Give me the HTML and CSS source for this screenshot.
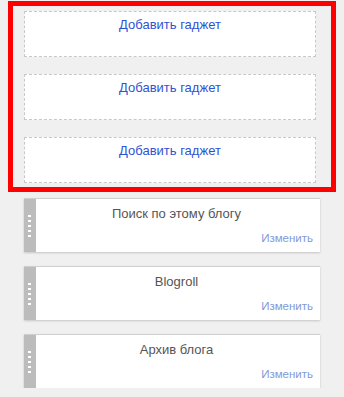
FILE: index.html
```html
<!DOCTYPE html>
<html lang="ru">
<head>
<meta charset="utf-8">
<link rel="stylesheet" href="styles.css">
</head>
<body>
<div class="panel">
  <div class="slot"><a class="add" href="#">Добавить гаджет</a></div>
  <div class="slot"><a class="add" href="#">Добавить гаджет</a></div>
  <div class="slot"><a class="add" href="#">Добавить гаджет</a></div>
</div>
<div class="widgets">
  <div class="widget">
    <div class="handle"><i></i><i></i><i></i><i></i><i></i></div>
    <div class="body">
      <div class="title">Поиск по этому блогу</div>
      <a class="edit" href="#">Изменить</a>
    </div>
  </div>
  <div class="widget">
    <div class="handle"><i></i><i></i><i></i><i></i><i></i></div>
    <div class="body">
      <div class="title">Blogroll</div>
      <a class="edit" href="#">Изменить</a>
    </div>
  </div>
  <div class="widget">
    <div class="handle"><i></i><i></i><i></i><i></i><i></i></div>
    <div class="body">
      <div class="title">Архив блога</div>
      <a class="edit" href="#">Изменить</a>
    </div>
  </div>
</div>
</body>
</html>
```
FILE: styles.css
```css
html, body {
  margin: 0;
  padding: 0;
  background: #f0f0f0;
  font-family: "Liberation Sans", Arial, sans-serif;
  font-size: 13px;
}
a { text-decoration: none; }
.panel {
  margin: 1px 0 0 8px;
  width: 328px;
  box-sizing: border-box;
  border: 5px solid #ff0000;
  padding: 5px 15px 4px 11px;
  display: flex;
  flex-direction: column;
  gap: 17px;
}
.slot {
  height: 46px;
  box-sizing: border-box;
  border: 1px dashed #c8c8c8;
  background: #fff;
  text-align: center;
  padding-top: 5px;
}
.add {
  color: #2f52d2;
  line-height: 16px;
}
.widgets {
  margin: 6px 0 0 24px;
  width: 296px;
  display: flex;
  flex-direction: column;
  gap: 14px;
}
.widget {
  height: 54px;
  display: flex;
  box-sizing: border-box;
  border-top: 1px solid #d0d0d0;
  box-shadow: 0 1px 2px rgba(0,0,0,0.18);
  background: #fff;
}
.handle {
  width: 12px;
  background: #bcbcbc;
  display: flex;
  flex-direction: column;
  gap: 3px;
  padding: 16px 0 0 4px;
  box-sizing: border-box;
}
.handle i {
  display: block;
  width: 3px;
  height: 2px;
  background: #fff;
}
.body {
  flex: 1;
  display: flex;
  flex-direction: column;
  padding: 7px 7px 0 4px;
}
.title {
  text-align: center;
  color: #555;
  line-height: 16px;
}
.edit {
  align-self: flex-end;
  color: #7f9ad8;
  font-size: 11.5px;
  line-height: 14px;
  margin-top: 9px;
}
```
